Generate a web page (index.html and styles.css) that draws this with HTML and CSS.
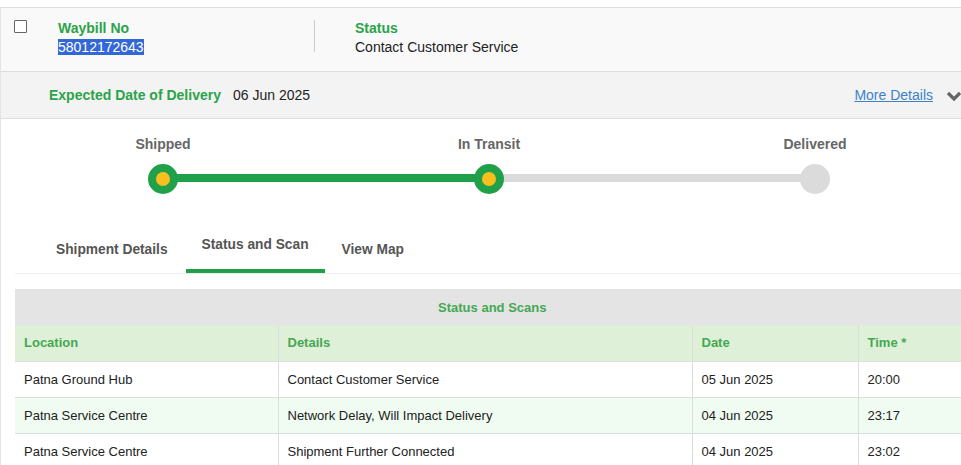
FILE: index.html
```html
<!DOCTYPE html>
<html lang="en">
<head>
    <meta charset="UTF-8">
    <title>Track Shipment</title>
    <link rel="stylesheet" href="styles.css">
</head>
<body>
    <div class="shipment">
        <div class="summary">
            <input type="checkbox" class="pick">
            <div class="field waybill">
                <div class="label">Waybill No</div>
                <div class="value"><span class="selected">58012172643</span></div>
            </div>
            <div class="divider"></div>
            <div class="field status">
                <div class="label">Status</div>
                <div class="value">Contact Customer Service</div>
            </div>
        </div>

        <div class="eta">
            <span class="label">Expected Date of Delivery</span>
            <span class="eta-date">06 Jun 2025</span>
            <a href="#" class="more">More Details</a>
            <svg class="chevron" width="16" height="12" viewBox="0 0 16 12">
                <polyline points="2,3 8,9 14,3" fill="none" stroke="#666" stroke-width="3.2"/>
            </svg>
        </div>

        <div class="panel">
            <div class="progress">
                <div class="step done">
                    <div class="step-name">Shipped</div>
                    <div class="dot"></div>
                </div>
                <div class="step current">
                    <div class="step-name">In Transit</div>
                    <div class="dot"></div>
                </div>
                <div class="step">
                    <div class="step-name">Delivered</div>
                    <div class="dot"></div>
                </div>
            </div>

            <div class="tabs">
                <a href="#" class="tab">Shipment Details</a>
                <a href="#" class="tab active">Status and Scan</a>
                <a href="#" class="tab">View Map</a>
            </div>

            <table class="scans">
                <colgroup>
                    <col class="c-loc">
                    <col class="c-det">
                    <col class="c-date">
                    <col class="c-time">
                </colgroup>
                <tr class="title"><td colspan="4">Status and Scans</td></tr>
                <tr class="head">
                    <th>Location</th>
                    <th>Details</th>
                    <th>Date</th>
                    <th>Time *</th>
                </tr>
                <tr>
                    <td>Patna Ground Hub</td>
                    <td>Contact Customer Service</td>
                    <td>05 Jun 2025</td>
                    <td>20:00</td>
                </tr>
                <tr class="alt">
                    <td>Patna Service Centre</td>
                    <td>Network Delay, Will Impact Delivery</td>
                    <td>04 Jun 2025</td>
                    <td>23:17</td>
                </tr>
                <tr>
                    <td>Patna Service Centre</td>
                    <td>Shipment Further Connected</td>
                    <td>04 Jun 2025</td>
                    <td>23:02</td>
                </tr>
            </table>
        </div>
    </div>
</body>
</html>
```

FILE: styles.css
```css
body {
    margin: 0;
    background: #fff;
    font-family: "Liberation Sans", Arial, sans-serif;
    color: #222;
    overflow: hidden;
}

.shipment {
    width: 985px;
    margin-top: 7px;
    border-top: 1px solid #ddd;
    border-left: 1px solid #e4e4e4;
}

.summary {
    display: flex;
    height: 64px;
    box-sizing: border-box;
    padding: 11px 0 0 13px;
    background: #f9f9f9;
    border-bottom: 1px solid #ddd;
}

.pick {
    appearance: none;
    width: 13px;
    height: 13px;
    margin: 1px 0 0 0;
    border: 1px solid #666;
    border-radius: 1px;
    background: #fff;
    box-sizing: border-box;
}

.field {
    font-size: 14px;
    line-height: 18px;
}

.field .label {
    color: #2ba34a;
    font-weight: bold;
}

.field .value {
    margin-top: 1px;
}

.waybill {
    margin-left: 31px;
    width: 256px;
}

.selected {
    background: #3367d6;
    color: #fff;
}

.divider {
    width: 1px;
    height: 32px;
    margin-top: 1px;
    background: #ccc;
}

.status {
    margin-left: 40px;
}

.eta {
    display: flex;
    align-items: center;
    height: 46px;
    padding-left: 48px;
    background: #f3f3f3;
    border-bottom: 1px solid #ddd;
    font-size: 14px;
}

    .eta .label {
        color: #2ba34a;
        font-weight: bold;
    }

.eta-date {
    margin-left: 12px;
}

.more {
    margin-left: auto;
    color: #3d82c8;
    text-decoration: underline;
}

.chevron {
    margin: 2px 24px 0 13px;
}

.panel {
    padding: 0 15px 0 14px;
}

.progress {
    display: grid;
    grid-template-columns: repeat(3, 326px);
    margin-left: -15px;
    padding-top: 17px;
}

.step {
    position: relative;
    text-align: center;
}

.step-name {
    font-size: 14px;
    line-height: 16px;
    font-weight: bold;
    color: #666;
}

.dot {
    position: relative;
    z-index: 1;
    width: 30px;
    height: 30px;
    margin: 12px auto 0;
    box-sizing: border-box;
    border-radius: 50%;
    background: #dcdbdc;
}

.step.done .dot,
.step.current .dot {
    border: 8px solid #21a04a;
    background: #f8bf1f;
}

/* connector to the next step */
.step::after {
    content: "";
    position: absolute;
    left: 50%;
    width: 100%;
    top: 38px;
    height: 8px;
    background: #dcdbdc;
}

.step.done::after {
    background: #21a04a;
}

.step:last-child::after {
    display: none;
}

.tabs {
    display: flex;
    margin-top: 33px;
    padding-left: 25px;
    border-bottom: 1px solid #eee;
}

.tab {
    display: block;
    padding: 15px 16px 11px;
    margin-right: 2px;
    font-size: 13.75px;
    line-height: 16px;
    font-weight: bold;
    color: #555;
    text-decoration: none;
    border-bottom: 4px solid transparent;
}

    .tab.active {
        padding-top: 10px;
        padding-bottom: 16px;
        margin-right: 1px;
        border-bottom-color: #21a04a;
    }

.scans {
    width: 955px;
    margin-top: 15px;
    border-collapse: collapse;
    table-layout: fixed;
    font-size: 13px;
}

.c-loc { width: 263px; }
.c-det { width: 414px; }
.c-date { width: 166px; }

.scans td,
.scans th {
    height: 36px;
    box-sizing: border-box;
    padding: 0 9px;
    text-align: left;
    border: 1px solid #ddd;
    border-top: none;
    white-space: nowrap;
}

.scans tr.title td {
    height: 36px;
    background: #e4e4e4;
    border: none;
    text-align: center;
    font-weight: bold;
    color: #45a853;
}

.scans th {
    background: #dff0d8;
    color: #45a853;
    font-weight: bold;
}

.scans tr.alt td {
    background: #f0fcf2;
}

.scans td:first-child,
.scans th:first-child {
    border-left: none;
}
```
